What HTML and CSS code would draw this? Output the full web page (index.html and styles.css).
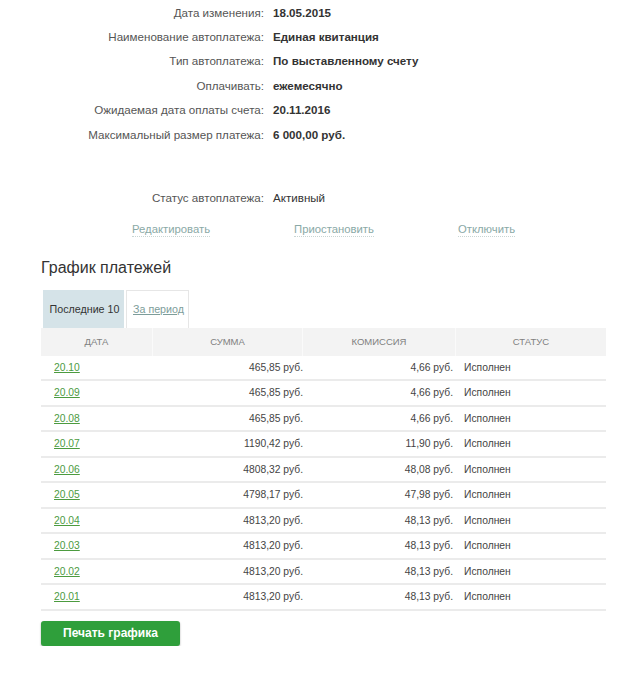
FILE: index.html
```html
<!DOCTYPE html>
<html lang="ru">
<head>
<meta charset="utf-8">
<link rel="stylesheet" href="styles.css">
</head>
<body>
<div class="page">
  <div class="info">
    <div class="lbl">Дата изменения:</div><div class="val">18.05.2015</div>
    <div class="lbl">Наименование автоплатежа:</div><div class="val">Единая квитанция</div>
    <div class="lbl">Тип автоплатежа:</div><div class="val">По выставленному счету</div>
    <div class="lbl">Оплачивать:</div><div class="val">ежемесячно</div>
    <div class="lbl">Ожидаемая дата оплаты счета:</div><div class="val">20.11.2016</div>
    <div class="lbl">Максимальный размер платежа:</div><div class="val">6 000,00 руб.</div>
  </div>
  <div class="info status">
    <div class="lbl">Статус автоплатежа:</div><div class="val plain">Активный</div>
  </div>
  <div class="actions">
    <a class="act">Редактировать</a>
    <a class="act">Приостановить</a>
    <a class="act">Отключить</a>
  </div>
  <h2 class="title">График платежей</h2>
  <div class="tabs">
    <div class="tab active">Последние 10</div>
    <div class="tab"><a class="tablink">За период</a></div>
  </div>
  <table class="grid">
    <thead>
      <tr><th class="c1">ДАТА</th><th class="c2">СУММА</th><th class="c3">КОМИССИЯ</th><th class="c4">СТАТУС</th></tr>
    </thead>
    <tbody>
      <tr><td class="c1"><a>20.10</a></td><td class="c2">465,85 руб.</td><td class="c3">4,66 руб.</td><td class="c4">Исполнен</td></tr>
      <tr><td class="c1"><a>20.09</a></td><td class="c2">465,85 руб.</td><td class="c3">4,66 руб.</td><td class="c4">Исполнен</td></tr>
      <tr><td class="c1"><a>20.08</a></td><td class="c2">465,85 руб.</td><td class="c3">4,66 руб.</td><td class="c4">Исполнен</td></tr>
      <tr><td class="c1"><a>20.07</a></td><td class="c2">1190,42 руб.</td><td class="c3">11,90 руб.</td><td class="c4">Исполнен</td></tr>
      <tr><td class="c1"><a>20.06</a></td><td class="c2">4808,32 руб.</td><td class="c3">48,08 руб.</td><td class="c4">Исполнен</td></tr>
      <tr><td class="c1"><a>20.05</a></td><td class="c2">4798,17 руб.</td><td class="c3">47,98 руб.</td><td class="c4">Исполнен</td></tr>
      <tr><td class="c1"><a>20.04</a></td><td class="c2">4813,20 руб.</td><td class="c3">48,13 руб.</td><td class="c4">Исполнен</td></tr>
      <tr><td class="c1"><a>20.03</a></td><td class="c2">4813,20 руб.</td><td class="c3">48,13 руб.</td><td class="c4">Исполнен</td></tr>
      <tr><td class="c1"><a>20.02</a></td><td class="c2">4813,20 руб.</td><td class="c3">48,13 руб.</td><td class="c4">Исполнен</td></tr>
      <tr><td class="c1"><a>20.01</a></td><td class="c2">4813,20 руб.</td><td class="c3">48,13 руб.</td><td class="c4">Исполнен</td></tr>
    </tbody>
  </table>
  <button class="print">Печать графика</button>
</div>
</body>
</html>
```

FILE: styles.css
```css
html, body {
  margin: 0;
  padding: 0;
  background: #ffffff;
}
body {
  font-family: "Liberation Sans", Arial, sans-serif;
  font-size: 11.6px;
  color: #333333;
}
.page {
  width: 565px;
  padding: 0 0 0 41px;
}
.info {
  display: grid;
  grid-template-columns: 223px auto;
  column-gap: 9px;
  grid-auto-rows: 24.4px;
  align-items: center;
}
.lbl {
  text-align: right;
  color: #555555;
  white-space: nowrap;
}
.val {
  font-weight: bold;
  color: #333333;
  white-space: nowrap;
}
.val.plain {
  font-weight: normal;
}
.status {
  margin-top: 39px;
}
.actions {
  display: flex;
  gap: 84px;
  padding-left: 91px;
  margin-top: 7px;
  height: 26px;
  align-items: center;
  font-size: 11.3px;
}
.act {
  color: #8aa9a6;
  border-bottom: 1px dotted #c9d6d4;
  line-height: 14px;
}
.title {
  margin: 15px 0 0 0;
  font-size: 16px;
  font-weight: normal;
  color: #333333;
  line-height: 20px;
}
.tabs {
  display: flex;
  gap: 2px;
  margin: 12px 0 0 2px;
  height: 38px;
}
.tab {
  display: flex;
  align-items: center;
  justify-content: center;
  color: #333333;
  font-size: 10.7px;
  white-space: nowrap;
  box-sizing: border-box;
}
.tab.active {
  background: #d5e3e8;
  width: 81px;
  padding-left: 2px;
}
.tab:not(.active) {
  border: 1px solid #e6e6e6;
  border-bottom: none;
  width: 63px;
  padding-left: 2px;
}
.tablink {
  color: #7d9d9a;
  text-decoration: underline;
}
.grid {
  width: 565px;
  border-collapse: separate;
  border-spacing: 0;
  table-layout: fixed;
}
.grid th,
.grid td {
  box-sizing: border-box;
}
.grid th {
  height: 28px;
  padding: 0;
  background: #f3f3f3;
  color: #808080;
  font-size: 9.5px;
  font-weight: normal;
  text-align: center;
  border-right: 1px solid #fafafa;
}
.grid th:last-child {
  border-right: none;
}
.grid td {
  height: 25.5px;
  padding: 0;
  border-bottom: 2px solid #ebebeb;
  color: #444444;
  font-size: 10.3px;
  white-space: nowrap;
}
.c1 { width: 112px; }
.c2 { width: 150px; }
.c3 { width: 153px; }
.c4 { width: 150px; }
.grid td.c1 { padding-left: 13px; }
.grid td.c2 { text-align: right; padding-right: 0; }
.grid td.c3 { text-align: right; padding-right: 3px; }
.grid td.c4 { padding-left: 8px; }
.grid td.c1 a {
  color: #4c9b3f;
  text-decoration: underline;
}
.print {
  display: block;
  margin-top: 10px;
  width: 139px;
  height: 25px;
  border: none;
  border-radius: 3px;
  background: #2f9f3b;
  color: #ffffff;
  font-family: "Liberation Sans", Arial, sans-serif;
  font-size: 12px;
  font-weight: bold;
  box-shadow: 0 1px 2px rgba(0,0,0,0.35);
  padding: 0;
}
```
